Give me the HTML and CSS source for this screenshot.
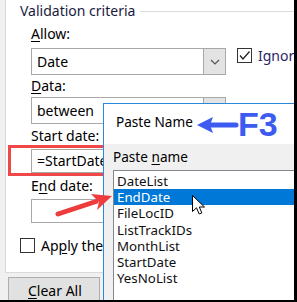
FILE: index.html
```html
<!DOCTYPE html>
<html lang="en">
<head>
<meta charset="UTF-8">
<title>Data Validation - Paste Name</title>
<link rel="stylesheet" href="styles.css">
</head>
<body>
<div class="frame">
  <div class="page">
    <div class="legend">Validation criteria</div>
    <div class="fields">
      <div class="label lbl-allow"><u>A</u>llow:</div>
      <div class="combo-row">
        <div class="combo">
          <span class="combo-text">Date</span>
          <span class="combo-btn">
            <svg width="10" height="6" viewBox="0 0 10 6"><path d="M1 1 L5 5 L9 1" fill="none" stroke="#555" stroke-width="1.2"/></svg>
          </span>
        </div>
        <span class="check checked">
          <svg width="13" height="13" viewBox="0 0 13 13"><path d="M2 6.5 L5 10 L11.5 2.5" fill="none" stroke="#222" stroke-width="1.3"/></svg>
        </span>
        <span class="ignore">Ignore</span>
      </div>
      <div class="label lbl-data"><u>D</u>ata:</div>
      <div class="combo">
        <span class="combo-text">between</span>
        <span class="combo-btn"></span>
      </div>
      <div class="label lbl-start">Start date:</div>
      <div class="textbox">=StartDate</div>
      <div class="label lbl-end">E<u>n</u>d date:</div>
      <div class="textbox"></div>
      <div class="apply-row">
        <span class="check"></span>
        <span>Ap<u>p</u>ly these changes</span>
      </div>
    </div>
  </div>
  <div class="btn-clear"><u>C</u>lear All</div>

  <div class="highlight-box"></div>

  <div class="popup">
    <div class="popup-title">Paste Name</div>
    <div class="popup-body">
      <div class="popup-label">Paste <u>n</u>ame</div>
      <ul class="name-list">
        <li>DateList</li>
        <li class="selected">EndDate</li>
        <li>FileLocID</li>
        <li>ListTrackIDs</li>
        <li>MonthList</li>
        <li>StartDate</li>
        <li>YesNoList</li>
      </ul>
    </div>
  </div>

  <svg class="blue-arrow" width="44" height="20" viewBox="0 0 44 20">
    <path d="M1 10 L17 2 L14 10 L17 18 Z" fill="#3d5af1"/>
    <line x1="14" y1="10" x2="40" y2="10" stroke="#3d5af1" stroke-width="5" stroke-linecap="round"/>
  </svg>
  <div class="f3">F3</div>

  <svg class="red-arrow" width="70" height="40" viewBox="0 0 70 40">
    <line x1="8" y1="29" x2="46" y2="16.5" stroke="#ee3b3b" stroke-width="5" stroke-linecap="round"/>
    <path d="M62 11 L47 25 L49 17 L41 9 Z" fill="#ee3b3b"/>
  </svg>

  <svg class="cursor" width="14" height="21" viewBox="0 0 14 21">
    <path d="M0.5 0.5 L0.5 16.5 L4.5 12.8 L7.2 19 L9.8 17.9 L7.3 12 L12.5 12 Z" fill="#fff" stroke="#000" stroke-width="1"/>
  </svg>
</div>
</body>
</html>
```

FILE: styles.css
```css
body { margin: 0; }
u { text-decoration: underline; text-underline-offset: 2px; }

.frame {
  position: relative;
  width: 297px;
  height: 302px;
  box-sizing: border-box;
  overflow: hidden;
  background: #f0f0f0;
  border-right: 3px solid #000;
  border-bottom: 2px solid #000;
  font-family: "Noto Sans", sans-serif;
  font-size: 14px;
  color: #000;
}

.page {
  margin-left: 5px;
  height: 273px;
  box-sizing: border-box;
  padding-top: 1px;
  background: #fff;
  border-left: 1px solid #dadada;
  border-bottom: 1px solid #dadada;
}

.legend {
  display: flex;
  align-items: center;
  gap: 5px;
  height: 20px;
  line-height: 20px;
  padding-left: 14px;
  color: #1a1a40;
  white-space: nowrap;
}
.legend::after { content: ""; flex: 1; border-top: 1px solid #dcdcdc; }

.fields { padding-left: 25px; }
.label { height: 18px; line-height: 18px; white-space: nowrap; }
.lbl-allow { margin-top: 4px; }
.lbl-data { margin-top: 2px; }
.lbl-start { margin-top: 3px; }
.lbl-end { margin-top: 4px; }

.combo-row { display: flex; align-items: flex-start; margin-top: 5px; white-space: nowrap; }
.combo-row .check { margin-left: 11px; }
.ignore { margin-left: 6px; line-height: 16px; color: #2a1f66; }

.combo {
  display: flex;
  flex: none;
  width: 195px;
  height: 27px;
  box-sizing: border-box;
  border: 1px solid #a8a8a8;
  background: #fff;
}
.fields > .combo { margin-top: 2px; }
.combo-text { flex: 1; padding-left: 5px; line-height: 25px; }
.combo-btn {
  width: 21px;
  display: flex;
  align-items: center;
  justify-content: center;
  background: #e3e3e3;
  border-left: 1px solid #a8a8a8;
}

.textbox {
  margin-top: 4px;
  width: 160px;
  height: 24px;
  box-sizing: border-box;
  border: 1px solid #a8a8a8;
  background: #fff;
  padding-left: 5px;
  line-height: 22px;
}

.check {
  display: inline-flex;
  align-items: center;
  justify-content: center;
  width: 15px;
  height: 15px;
  box-sizing: border-box;
  border: 1px solid #333;
  background: #fff;
  flex: none;
}

.apply-row {
  display: flex;
  align-items: center;
  gap: 6px;
  margin-top: 13px;
  margin-left: -11px;
  white-space: nowrap;
}

.btn-clear {
  margin: 4px 0 0 8px;
  width: 92px;
  height: 30px;
  box-sizing: border-box;
  border: 1px solid #adadad;
  background: #e1e1e1;
  padding-left: 19px;
  line-height: 26px;
}

.highlight-box {
  position: absolute;
  left: 8px;
  top: 145px;
  width: 99px;
  height: 31px;
  box-sizing: border-box;
  border: 3px solid #f04848;
}

.popup {
  position: absolute;
  left: 103px;
  top: 103px;
  width: 220px;
  height: 220px;
  border: 1px solid #2b88d8;
  background: #f0f0f0;
  font-size: 13.6px;
}
.popup-title {
  height: 40px;
  box-sizing: border-box;
  background: #fff;
  padding: 8px 0 0 12px;
  line-height: 20px;
}
.popup-body { padding: 3px 0 0 9px; }
.popup-label { line-height: 20px; height: 23px; }
.name-list {
  list-style: none;
  margin: 0;
  padding: 2px 0 0 0;
  height: 200px;
  background: #fff;
  border: 1px solid #828790;
  font-size: 13.3px;
}
.name-list li { height: 16.2px; line-height: 16.2px; padding-left: 3px; color: #111; }
.name-list li.selected { background: #0078d7; color: #fff; }

.blue-arrow { position: absolute; left: 196px; top: 115px; }
.f3 {
  position: absolute;
  left: 238px;
  top: 104px;
  font-family: "Liberation Sans", sans-serif;
  font-weight: bold;
  font-size: 34px;
  line-height: 40px;
  color: #3d5af1;
}
.red-arrow { position: absolute; left: 50px; top: 185px; }
.cursor { position: absolute; left: 192px; top: 195px; }
```
